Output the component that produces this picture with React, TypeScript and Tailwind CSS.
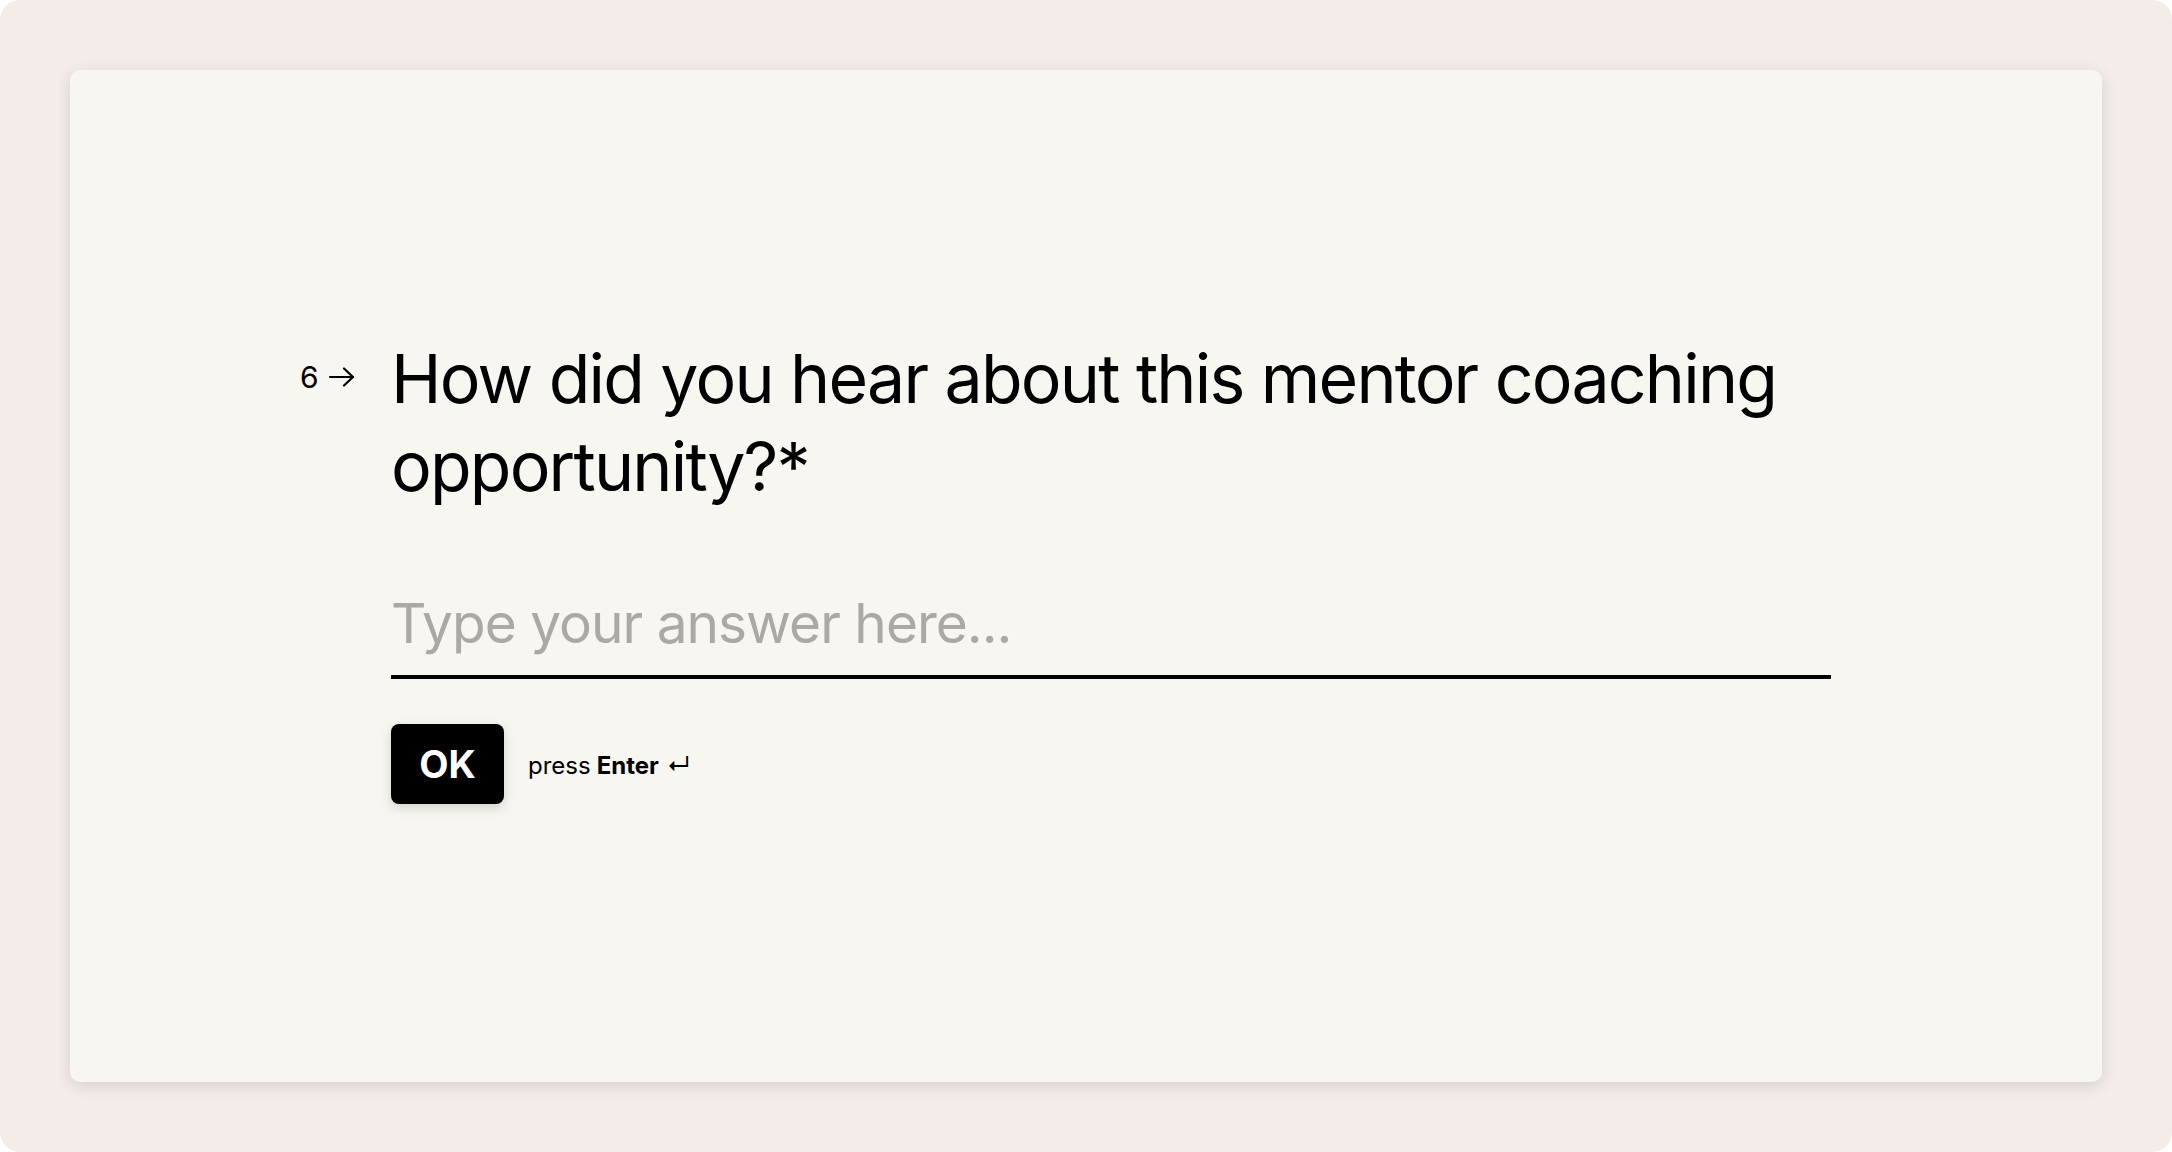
import React from "react";

export default function App() {
  return (
    <div className="w-[2172px] h-[1152px] bg-white" style={{ fontFamily: "Inter, 'Noto Sans', sans-serif" }}>
      <div className="w-full h-full rounded-[20px] bg-[#f3ece8] pt-[70px] px-[70px]">
        <div className="w-[2032px] h-[1012px] rounded-[10px] bg-[#f7f6f1] shadow-[0_4px_16px_rgba(0,0,0,0.12)] flex items-start pt-[264px] pl-[230px]">
          <div className="flex">
            <div className="w-[91px] flex items-start pt-[23px] text-black">
              <span className="text-[30px] leading-[40px]">6</span>
              <svg className="ml-[9px] mt-[8px]" width="28" height="24" viewBox="0 0 28 24" fill="none" stroke="black" strokeWidth="2.2" strokeLinecap="round" strokeLinejoin="round">
                <path d="M2 12h23" />
                <path d="M16 3.5l9 8.5-9 8.5" />
              </svg>
            </div>
            <div className="w-[1440px]">
              <div className="text-[68px] leading-[88px] text-black tracking-[-1.8px]">
                How did you hear about this mentor coaching opportunity?*
              </div>
              <div className="mt-[77px] border-b-[4px] border-black pb-[16px] text-[55px] leading-[72px] tracking-[-1px] text-[#aaa9a4]">
                Type your answer here...
              </div>
              <div className="mt-[45px] flex items-center">
                <div className="w-[113px] h-[80px] rounded-[8px] bg-black text-white font-bold text-[38px] flex items-center justify-center shadow-[0_4px_12px_rgba(0,0,0,0.15)]">
                  OK
                </div>
                <div className="ml-[24px] mt-[4px] text-[24px] text-black flex items-center">
                  <span>press</span>
                  <span className="font-bold ml-[6px]">Enter</span>
                  <span className="ml-[8px]">↵</span>
                </div>
              </div>
            </div>
          </div>
        </div>
      </div>
    </div>
  );
}
